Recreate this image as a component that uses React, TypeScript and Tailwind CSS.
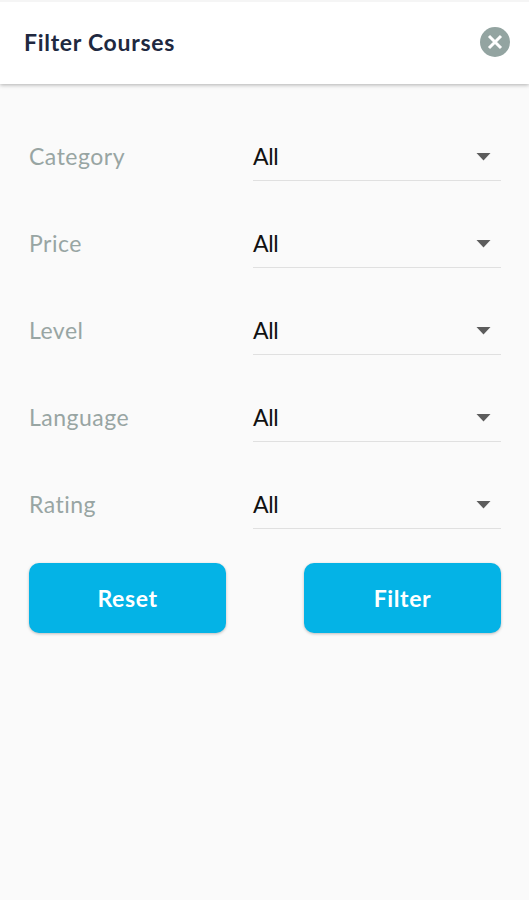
import React, { useState } from 'react';

const filters = ['Category', 'Price', 'Level', 'Language', 'Rating'];

interface FilterRowProps {
  label: string;
  value: string;
}

const FilterRow: React.FC<FilterRowProps> = ({ label, value }) => (
  <div className="flex h-[87px] items-end">
    <span className="flex h-12 w-[224px] items-center pb-0.5 text-[23px] tracking-[0.5px] text-[#98a5a3]">
      {label}
    </span>
    <button
      type="button"
      className="flex h-12 flex-1 items-center justify-between border-b border-[#e0e0e0] pr-[10px] text-left text-[23px] tracking-[-0.3px] text-[#111111]"
    >
      <span>{value}</span>
      <svg width="15" height="8" viewBox="0 0 15 8" fill="#5c5c5c">
        <path d="M0.5 0h14L7.5 7.5z" />
      </svg>
    </button>
  </div>
);

const ActionButton: React.FC<{ label: string; onClick?: () => void }> = ({ label, onClick }) => (
  <button
    type="button"
    onClick={onClick}
    className="h-[70px] w-[197px] rounded-[10px] bg-[#04b3e6] text-[23px] font-bold tracking-[0.6px] text-white shadow-[0_1px_3px_rgba(0,0,0,0.25)]"
  >
    {label}
  </button>
);

export default function App() {
  const [values, setValues] = useState<Record<string, string>>({});

  return (
    <div className="min-h-screen bg-[#fafafa] font-['Lato',sans-serif]">
      <header className="flex h-[84px] items-center justify-between border-t-2 border-[#f5f5f5] bg-white pr-[19px] pb-0.5 pl-6 shadow-[0_1px_4px_rgba(0,0,0,0.3)]">
        <h1 className="text-[23px] font-bold tracking-[0.7px] text-[#20283f]">Filter Courses</h1>
        <button type="button" aria-label="Close">
          <svg width="30" height="30" viewBox="0 0 30 30" fill="none">
            <circle cx="15" cy="15" r="15" fill="#93a4a1" />
            <path d="M9 9l12 12M21 9L9 21" stroke="#fff" strokeWidth="3" />
          </svg>
        </button>
      </header>

      <main className="pt-[10px] pr-7 pl-[29px]">
        {filters.map((name) => (
          <FilterRow key={name} label={name} value={values[name] ?? 'All'} />
        ))}
        <div className="mt-[34px] flex justify-between">
          <ActionButton label="Reset" onClick={() => setValues({})} />
          <ActionButton label="Filter" />
        </div>
      </main>
    </div>
  );
}
